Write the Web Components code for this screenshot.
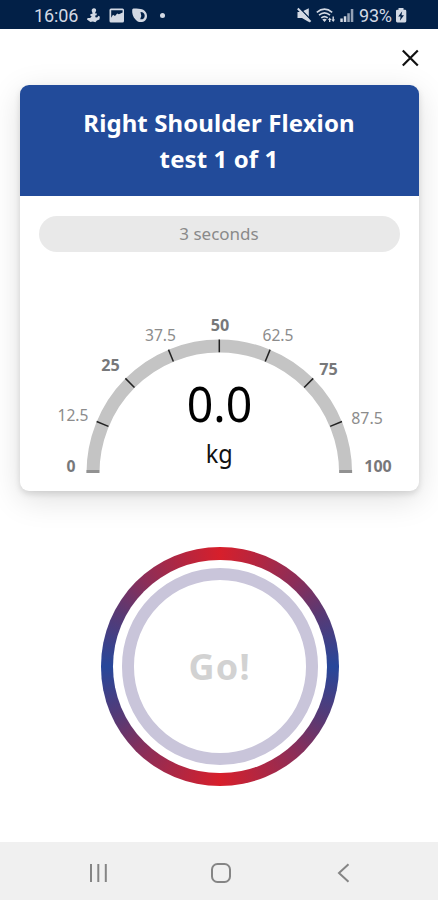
<!DOCTYPE html>
<html lang="en">
<head>
<meta charset="utf-8">
<meta name="viewport" content="width=device-width, initial-scale=1">
<title>Muscle test</title>
<style>
  body {
    margin: 0;
    height: 900px;
    overflow: hidden;
    background: #fff;
    font-family: "Noto Sans", sans-serif;
  }
</style>
</head>
<body>
<test-screen>
  <status-bar slot="status" time="16:06" battery="93%"></status-bar>
  <test-card>
    <span slot="title">Right Shoulder Flexion<br>test 1 of 1</span>
    <time-pill>3 seconds</time-pill>
    <force-gauge value="0.0" unit="kg" max="100"></force-gauge>
  </test-card>
  <go-button>Go!</go-button>
  <nav-bar slot="nav"></nav-bar>
</test-screen>

<script>
(function(){

  function define(name, html, setup){
    const template = document.createElement("template");
    template.innerHTML = html;

    customElements.define(name, class extends HTMLElement {
      constructor() {
        super();
        this.attachShadow({ mode: "open" });
        this.shadowRoot.appendChild(template.content.cloneNode(true));
      }
      connectedCallback() {
        if(setup) setup(this, this.shadowRoot);
      }
    });
  }

  define("test-screen", `
    <style>
      :host { display: flex; flex-direction: column; height: 900px; }
      .top { display: flex; justify-content: flex-end; height: 56px; box-sizing: border-box; padding: 18.5px 18px 0 0; }
      button { border: 0; padding: 0; background: none; width: 20px; height: 20px; }
      svg { display: block; }
      main { flex: 1; display: flex; flex-direction: column; align-items: center; }
    </style>
    <slot name="status"></slot>
    <div class="top">
      <button type="button" aria-label="Close">
        <svg width="20" height="20" viewBox="0 0 20 20"><path d="M2.800 2.500l15 15M17.800 2.500l-15 15" stroke="#111" stroke-width="2.200"/></svg>
      </button>
    </div>
    <main><slot></slot></main>
    <slot name="nav"></slot>
  `);

  define("status-bar", `
    <style>
      :host {
        display: flex; justify-content: space-between; box-sizing: border-box;
        height: 29.4px; padding: 5px 31px 0 34px;
        background: #022047; color: #d3d9e4;
        font: 18px/21px Roboto, sans-serif;
      }
      div { display: flex; }
      svg { display: block; fill: #d3d9e4; }
      #time { width: 52px; white-space: nowrap; letter-spacing: -.1px; }
      #battery { width: 37px; white-space: nowrap; letter-spacing: -.2px; }
    </style>
    <div>
      <span id="time"></span>
      <svg width="84" height="21" viewBox="86 5 84 21">
        <path d="M94 8.200c1.700 0 2.800 1.600 1.800 3.400l-.9 1.600 2 .4-.4 1.700-1.300.3.200 1.700 1.700.2 1.400-1.800 1.400 1-.5 2.700-2.500 1.200-1.500 1.600-2.500-.800-2.500.5-3.400-2.400.6-1.400 2.600-.2 1.500-1.700-1.500-.6.200-1.400 2.300-.6-.9-2.400c-.5-1.600.6-3 2.200-3z"/>
        <path fill-rule="evenodd" d="M111 8.500h11.500q1.500 0 1.500 1.500v11q0 1.500-1.500 1.500H111q-1.500 0-1.500-1.500V10q0-1.500 1.500-1.500zm.2 1.800v7.400l1.800-3 2 1.200 2.200-2.300 1.700.6 3.700-1.700v-2.200z"/>
        <path fill-rule="evenodd" d="M133.500 8.600q4-.6 7 .4c4 .6 6.500 3.500 6.500 6.900 0 3.600-2.700 6.200-6.300 6.200-2.200 0-4-1-5.200-2.600-2.600-2.300-3.600-6.500-3.300-9.200.1-1.100.4-1.500 1.300-1.700zm7 3.300q1.600 3.600-.3 7.400c2.700.4 4.500-1.200 4.500-3.600 0-2.200-1.800-3.900-4.200-3.800z"/>
        <circle cx="162.500" cy="15.500" r="2.500"/>
      </svg>
    </div>
    <div>
      <svg width="64" height="21" viewBox="295 5 64 21">
        <path d="M297.500 12h3.700l7.600-3.700v13.800L302 18h-4.500z"/>
        <path d="M299 7.500l12 12.600" stroke="#022047" stroke-width="1.500"/>
        <path d="M297.800 8.500l12.700 13.300" stroke="#d3d9e4" stroke-width="2"/>
        <g fill="none" stroke="#d3d9e4" stroke-width="1.600">
          <path d="M316.800 12.300q7.700-6.400 15.400 0M319 15.200q5.500-4.600 11 0M321.300 17.900q3.200-2.600 6.400 0"/>
        </g>
        <path d="M322.300 19.400q2.200-1.500 4.400 0l-2.200 2.500zM328 20l1.700-2.500 1.700 2.500zM331.300 19.500h3.800l-1.900 2.600zM329 20h1.400v2H329zM332.500 16.500h1.400v3h-1.400z"/>
        <path d="M340.300 18.500h2.500V22h-2.500zM343.800 16.300h2.500V22h-2.500z"/>
        <path d="M347.300 13.300h2.500V22h-2.500zM350.800 9h2.500v13h-2.500z" opacity=".7"/>
      </svg>
      <span id="battery"></span>
      <svg width="11" height="21" viewBox="396 5 11 21">
        <path d="M398.500 8h5v1.700h1.500q1.300 0 1.300 1.300v10q0 1.400-1.300 1.400h-7.700q-1.300 0-1.300-1.400V11q0-1.300 1.300-1.300h1.200z"/>
        <path fill="#022047" d="M402.200 11.200l-4 5.200h2.400l-.7 4.300 4.100-5.500h-2.500z"/>
      </svg>
    </div>
  `, function(host, root){
    root.querySelector("#time").textContent = host.getAttribute("time");
    root.querySelector("#battery").textContent = host.getAttribute("battery");
  });

  define("test-card", `
    <style>
      :host {
        display: block; width: 399px; height: 406px; border-radius: 9px; overflow: hidden;
        background: #fff; box-shadow: 0 3px 6px rgba(0,0,0,.12), 0 8px 32px rgba(0,0,0,.13);
      }
      header {
        height: 111px; box-sizing: border-box; padding-top: 20px;
        background: #224b9a; color: #fff; text-align: center;
        font-size: 24px; line-height: 36px; font-weight: 700; letter-spacing: .1px;
      }
      .body { padding: 20px 19px 0; }
    </style>
    <header><slot name="title"></slot></header>
    <div class="body"><slot></slot></div>
  `);

  define("time-pill", `
    <style>
      :host {
        display: block; height: 36px; border-radius: 18px; background: #e9e9e9;
        color: #8a8a8a; text-align: center; font-size: 17px; line-height: 35px;
      }
    </style>
    <slot></slot>
  `);

  define("force-gauge", `
    <style>
      :host { display: block; margin: 48px -19px 0; }
      svg { display: block; }
      text { text-anchor: middle; fill: #8c8c8c; font-size: 16px; }
      .major { font-weight: 700; fill: #77787a; }
      #value { font-size: 50px; fill: #000; }
      #unit { font-size: 24.5px; fill: #111; }
    </style>
    <svg width="399" height="190" viewBox="20 300 399 190">
      <path d="M93 473A126.300 127 0 0 1 345.600 473" fill="none" stroke="#c4c4c4" stroke-width="13"/>
      <g id="ticks"></g>
      <g id="labels"></g>
      <text id="value" x="219.500" y="421.500" textLength="65.500" lengthAdjust="spacingAndGlyphs"></text>
      <text id="unit" x="219.300" y="463" textLength="27" lengthAdjust="spacingAndGlyphs"></text>
    </svg>
  `, function(host, root){
    const NS = "http://www.w3.org/2000/svg";
    const max = Number(host.getAttribute("max"));
    // label centre, baseline and drawn width for each eighth of the dial
    const spots = [
      [71, 472, 9], [73, 420.5, 31], [110.5, 371, 18.5], [160.5, 341, 31], [220, 331, 18.5],
      [278, 341, 31], [328.5, 374.5, 18.5], [367, 423.5, 31.5], [378, 472, 27.5]
    ];

    spots.forEach(function(spot, i){
      const angle = Math.PI * (1 - i / 8);
      const end = i == 0 || i == 8;
      const line = document.createElementNS(NS, "line");
      const lift = end ? 1.5 : 0.7;
      line.setAttribute("x1", 219.3 + 120 * Math.cos(angle));
      line.setAttribute("y1", 473 - lift - 120 * Math.sin(angle));
      line.setAttribute("x2", 219.3 + 132.8 * Math.cos(angle));
      line.setAttribute("y2", 473 - lift - 132.8 * Math.sin(angle));
      line.setAttribute("stroke", end ? "#929292" : "#222");
      line.setAttribute("stroke-width", end ? 3 : 1.5);
      root.querySelector("#ticks").appendChild(line);

      const text = document.createElementNS(NS, "text");
      text.textContent = max * i / 8;
      text.setAttribute("x", spot[0]);
      text.setAttribute("y", spot[1]);
      text.setAttribute("textLength", spot[2]);
      text.setAttribute("lengthAdjust", "spacingAndGlyphs");
      if(i % 2 == 0) text.setAttribute("class", "major");
      root.querySelector("#labels").appendChild(text);
    });

    root.querySelector("#value").textContent = host.getAttribute("value");
    root.querySelector("#unit").textContent = host.getAttribute("unit");
  });

  define("go-button", `
    <style>
      :host { display: block; margin: 56px 0 0 1.5px; }
      button {
        display: block; box-sizing: border-box; width: 238.5px; height: 238.5px; padding: 12.5px;
        border: 0; border-radius: 50%; font: inherit;
        background: conic-gradient(#d71f2b, #8a2e59 42deg, #593973 62deg, #27479a 90deg, #593973 118deg, #8a2e59 138deg, #d71f2b 180deg, #8a2e59 222deg, #593973 242deg, #27479a 270deg, #593973 298deg, #8a2e59 318deg, #d71f2b);
      }
      .gap { box-sizing: border-box; height: 100%; padding: 8.5px; border-radius: 50%; background: #fff; }
      .inner {
        display: flex; align-items: center; justify-content: center; box-sizing: border-box;
        height: 100%; border: 12.5px solid #c9c5da; border-radius: 50%;
        color: #d2d2d2; font-size: 36px; font-weight: 700; line-height: 1; letter-spacing: 1.3px;
      }
    </style>
    <button type="button"><div class="gap"><div class="inner"><slot></slot></div></div></button>
  `);

  define("nav-bar", `
    <style>
      :host {
        display: flex; align-items: center; justify-content: space-between; box-sizing: border-box;
        height: 58px; padding: 3px 84px 0 87px; background: #f0f0f0;
      }
      svg { display: block; fill: none; stroke: #858585; stroke-width: 2; }
    </style>
    <svg width="22" height="22" viewBox="0 0 22 22"><path d="M4 2v18M11.300 2v18M18.800 2v18"/></svg>
    <svg width="22" height="22" viewBox="0 0 22 22"><rect x="1" y="2" width="18" height="18" rx="5.500"/></svg>
    <svg width="20" height="22" viewBox="0 0 20 22"><path d="M14.500 2.300L5 11l9.500 8.700"/></svg>
  `);

})();
</script>
</body>
</html>
